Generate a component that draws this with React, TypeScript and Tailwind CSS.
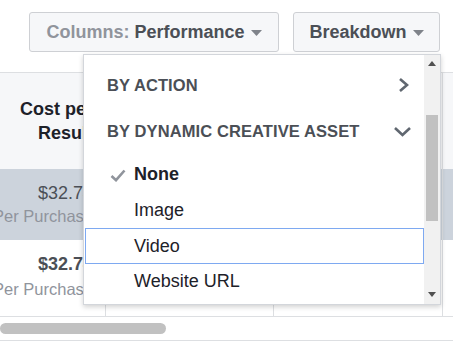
import React from "react";

const Caret = () => (
  <svg width="11" height="6" viewBox="0 0 11 6" className="ml-[6px] mt-[1px]">
    <path d="M0 0 L11 0 L5.5 6 Z" fill="#7f838a" />
  </svg>
);

export default function App() {
  return (
    <div className="relative w-[453px] h-[351px] bg-white overflow-hidden font-['Liberation_Sans',Arial,sans-serif]">
      {/* Toolbar */}
      <div className="flex justify-end gap-[14px] pt-[12px] pr-[13px] h-[72px]">
        <button className="flex items-center justify-center w-[250px] h-[40px] bg-[#f6f7f9] border border-[#ced0d4] rounded-[3px] text-[18px] font-bold">
          <span className="text-[#90949c]">Columns:&nbsp;</span>
          <span className="text-[#4b4f56]">Performance</span>
          <Caret />
        </button>
        <button className="flex items-center justify-center w-[147px] h-[40px] bg-[#f6f7f9] border border-[#ced0d4] rounded-[3px] text-[18px] font-bold text-[#4b4f56]">
          <span>Breakdown</span>
          <Caret />
        </button>
      </div>

      {/* Table */}
      <div className="border-t border-[#dddfe2]">
        <div className="flex h-[96px] bg-[#f6f7f9]">
          <div className="w-[106px] shrink-0 border-r border-[#dddfe2] flex items-center justify-end pr-[12px]">
            <div className="text-right text-[18px] leading-[24px] font-bold text-[#1d2129] whitespace-nowrap">
              <div>Cost per</div>
              <div>Result</div>
            </div>
          </div>
          <div className="w-[168px] shrink-0 border-r border-[#dddfe2]" />
          <div className="w-[169px] shrink-0 border-r border-[#dddfe2]" />
          <div className="flex-1" />
        </div>
        <div className="flex h-[71px] bg-[#ccd3dc]">
          <div className="w-[106px] shrink-0 border-r border-[#dddfe2] flex flex-col items-end justify-center pr-[12px] whitespace-nowrap">
            <div className="text-[18px] leading-[23px] text-[#4b4f56]">$32.74</div>
            <div className="text-[16.5px] leading-[23px] text-[#90949c]">Per Purchase</div>
          </div>
          <div className="w-[168px] shrink-0 border-r border-[#dddfe2]" />
          <div className="w-[169px] shrink-0 border-r border-[#dddfe2]" />
          <div className="flex-1" />
        </div>
        <div className="flex h-[76px] bg-white">
          <div className="w-[106px] shrink-0 border-r border-[#dddfe2] flex flex-col items-end justify-center pr-[12px] pb-[3px] whitespace-nowrap">
            <div className="text-[18px] leading-[25px] font-bold text-[#4b4f56]">$32.74</div>
            <div className="text-[16.5px] leading-[25px] text-[#90949c]">Per Purchase</div>
          </div>
          <div className="w-[168px] shrink-0 border-r border-[#dddfe2]" />
          <div className="w-[169px] shrink-0 border-r border-[#dddfe2]" />
          <div className="flex-1" />
        </div>
        <div className="border-t border-b border-[#dddfe2] pt-[6px] pb-[6px]">
          <div className="w-[166px] h-[11px] rounded-full bg-[#c1c1c1]" />
        </div>
      </div>

      {/* Dropdown */}
      <div className="absolute left-[83px] top-[54px] w-[358px] h-[251px] bg-white border border-[#d3d6db] shadow-[0_2px_5px_rgba(0,0,0,0.18)] flex">
        <div className="flex-1 flex flex-col pt-[7px]">
          <div className="h-[46px] flex items-center justify-between pl-[23px] pr-[13px]">
            <span className="text-[16.5px] font-bold text-[#4b4f56] tracking-[0.1px]">BY ACTION</span>
            <svg width="14" height="16" viewBox="0 0 14 16">
              <path d="M3 2 L10 8 L3 14" fill="none" stroke="#606770" strokeWidth="2.6" />
            </svg>
          </div>
          <div className="h-[46px] flex items-center justify-between pl-[23px] pr-[12px]">
            <span className="text-[16.5px] font-bold text-[#4b4f56] tracking-[0.1px]">BY DYNAMIC CREATIVE ASSET</span>
            <svg width="19" height="11" viewBox="0 0 19 11">
              <path d="M2 2 L9.5 9 L17 2" fill="none" stroke="#606770" strokeWidth="2.6" />
            </svg>
          </div>
          <div className="h-[36px] mt-[2px] flex items-center pl-[26px]">
            <svg width="16" height="13" viewBox="0 0 16 13" className="mr-[8px] mt-[2px]">
              <path d="M1.5 7 L6 11.2 L14.5 1.5" fill="none" stroke="#90949c" strokeWidth="2.6" />
            </svg>
            <span className="text-[18px] font-bold text-[#1d2129]">None</span>
          </div>
          <div className="h-[36px] flex items-center pl-[50px]">
            <span className="text-[18px] text-[#1d2129]">Image</span>
          </div>
          <div className="h-[36px] flex items-center pl-[48px] ml-[1px] border-[1.5px] border-[#7ea9f1]">
            <span className="text-[18px] text-[#1d2129]">Video</span>
          </div>
          <div className="h-[35px] flex items-center pl-[50px]">
            <span className="text-[18px] text-[#1d2129]">Website URL</span>
          </div>
        </div>
        <div className="w-[16px] bg-[#f1f1f1] flex flex-col items-center">
          <div className="h-[17px] flex items-center justify-center">
            <svg width="8" height="5" viewBox="0 0 8 5"><path d="M0 5 L8 5 L4 0 Z" fill="#505050" /></svg>
          </div>
          <div className="h-[43px]" />
          <div className="w-[12px] h-[106px] bg-[#c1c1c1]" />
          <div className="flex-1" />
          <div className="h-[20px] flex items-center justify-center">
            <svg width="8" height="5" viewBox="0 0 8 5"><path d="M0 0 L8 0 L4 5 Z" fill="#505050" /></svg>
          </div>
        </div>
      </div>
    </div>
  );
}
